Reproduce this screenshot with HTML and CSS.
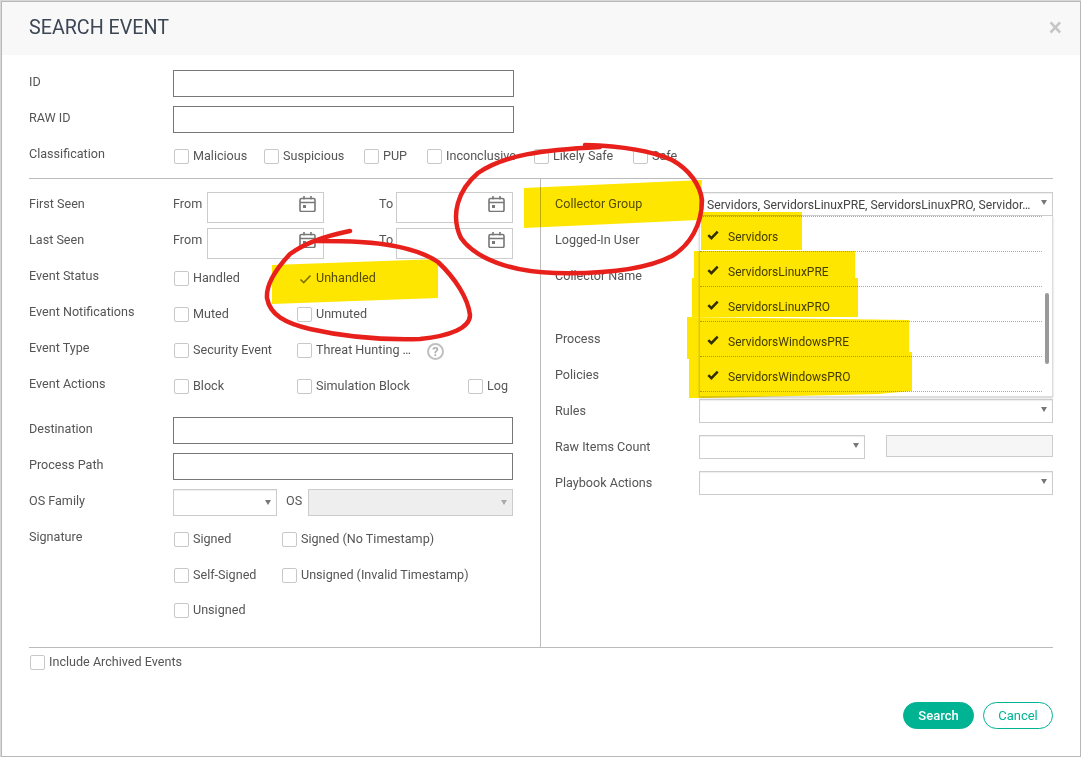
FILE: index.html
```html
<!DOCTYPE html>
<html lang="en">
<head>
    <meta charset="UTF-8">
    <title>Search Event</title>
    <link rel="stylesheet" href="styles.css">
</head>
<body>
    <div class="modal">
        <div class="modal-header">
            <h1>SEARCH EVENT</h1>
            <span class="close">×</span>
        </div>

        <div class="modal-body">
            <div class="row">
                <label>ID</label>
                <div class="text-input"></div>
            </div>
            <div class="row">
                <label>RAW ID</label>
                <div class="text-input"></div>
            </div>
            <div class="row">
                <label>Classification</label>
                <div class="options options-flow">
                    <span class="opt"><i class="box"></i>Malicious</span>
                    <span class="opt"><i class="box"></i>Suspicious</span>
                    <span class="opt"><i class="box"></i>PUP</span>
                    <span class="opt"><i class="box"></i>Inconclusive</span>
                    <span class="opt"><i class="box"></i>Likely Safe</span>
                    <span class="opt"><i class="box"></i>Safe</span>
                </div>
            </div>

            <div class="columns">
                <div class="col-left">
                    <div class="row">
                        <label>First Seen</label>
                        <div class="dates">
                            <span class="date-label">From</span>
                            <div class="date-input">
                                <svg class="cal" viewBox="0 0 17 17"><path d="M2.5 3.5h12a1.5 1.5 0 0 1 1.5 1.5v10a1.5 1.5 0 0 1-1.5 1.5h-12A1.500 1.500 0 0 1 1 15V5a1.500 1.500 0 0 1 1.500-1.500zM1 7.500h15M5 1v3.500M12 1v3.500" fill="none" stroke="#777" stroke-width="1.600"/><rect x="4" y="10" width="3" height="3" fill="#777"/></svg>
                            </div>
                            <span class="date-label date-to">To</span>
                            <div class="date-input date-input-to">
                                <svg class="cal" viewBox="0 0 17 17"><path d="M2.5 3.5h12a1.5 1.5 0 0 1 1.5 1.5v10a1.5 1.5 0 0 1-1.5 1.5h-12A1.500 1.500 0 0 1 1 15V5a1.500 1.500 0 0 1 1.500-1.500zM1 7.500h15M5 1v3.500M12 1v3.500" fill="none" stroke="#777" stroke-width="1.600"/><rect x="4" y="10" width="3" height="3" fill="#777"/></svg>
                            </div>
                        </div>
                    </div>
                    <div class="row">
                        <label>Last Seen</label>
                        <div class="dates">
                            <span class="date-label">From</span>
                            <div class="date-input">
                                <svg class="cal" viewBox="0 0 17 17"><path d="M2.5 3.5h12a1.5 1.5 0 0 1 1.5 1.5v10a1.5 1.5 0 0 1-1.5 1.5h-12A1.500 1.500 0 0 1 1 15V5a1.500 1.500 0 0 1 1.500-1.500zM1 7.500h15M5 1v3.500M12 1v3.500" fill="none" stroke="#777" stroke-width="1.600"/><rect x="4" y="10" width="3" height="3" fill="#777"/></svg>
                            </div>
                            <span class="date-label date-to">To</span>
                            <div class="date-input date-input-to">
                                <svg class="cal" viewBox="0 0 17 17"><path d="M2.5 3.5h12a1.5 1.5 0 0 1 1.5 1.5v10a1.5 1.5 0 0 1-1.5 1.5h-12A1.500 1.500 0 0 1 1 15V5a1.500 1.500 0 0 1 1.500-1.500zM1 7.500h15M5 1v3.500M12 1v3.500" fill="none" stroke="#777" stroke-width="1.600"/><rect x="4" y="10" width="3" height="3" fill="#777"/></svg>
                            </div>
                        </div>
                    </div>
                    <div class="row">
                        <label>Event Status</label>
                        <div class="options options-grid">
                            <span class="opt"><i class="box"></i>Handled</span>
                            <span class="opt"><i class="box box-checked"><svg viewBox="0 0 13 10"><path d="M1.500 5.500l3.200 3L11.500 1.500" fill="none" stroke="#7d7d7d" stroke-width="1.700"/></svg></i>Unhandled</span>
                        </div>
                    </div>
                    <div class="row">
                        <label>Event Notifications</label>
                        <div class="options options-grid">
                            <span class="opt"><i class="box"></i>Muted</span>
                            <span class="opt"><i class="box"></i>Unmuted</span>
                        </div>
                    </div>
                    <div class="row">
                        <label>Event Type</label>
                        <div class="options options-grid">
                            <span class="opt"><i class="box"></i>Security Event</span>
                            <span class="opt"><i class="box"></i>Threat Hunting …<b class="help">?</b></span>
                        </div>
                    </div>
                    <div class="row row-gap">
                        <label>Event Actions</label>
                        <div class="options options-actions">
                            <span class="opt"><i class="box"></i>Block</span>
                            <span class="opt"><i class="box"></i>Simulation Block</span>
                            <span class="opt"><i class="box"></i>Log</span>
                        </div>
                    </div>
                    <div class="row">
                        <label>Destination</label>
                        <div class="text-input"></div>
                    </div>
                    <div class="row">
                        <label>Process Path</label>
                        <div class="text-input"></div>
                    </div>
                    <div class="row">
                        <label>OS Family</label>
                        <div class="os-fields">
                            <div class="select select-tall select-os"></div>
                            <span class="os-label">OS</span>
                            <div class="select select-tall select-disabled"></div>
                        </div>
                    </div>
                    <div class="row">
                        <label>Signature</label>
                        <div class="options options-sign">
                            <span class="opt"><i class="box"></i>Signed</span>
                            <span class="opt"><i class="box"></i>Signed (No Timestamp)</span>
                        </div>
                    </div>
                    <div class="row row-short">
                        <label></label>
                        <div class="options options-sign">
                            <span class="opt"><i class="box"></i>Self-Signed</span>
                            <span class="opt"><i class="box"></i>Unsigned (Invalid Timestamp)</span>
                        </div>
                    </div>
                    <div class="row">
                        <label></label>
                        <div class="options options-sign">
                            <span class="opt"><i class="box"></i>Unsigned</span>
                        </div>
                    </div>
                </div>

                <div class="col-right">
                    <div class="row row-menu">
                        <label>Collector Group</label>
                        <div class="select select-value">Servidors, ServidorsLinuxPRE, ServidorsLinuxPRO, Servidor…</div>
                        <ul class="menu">
                            <li><svg class="tick" viewBox="0 0 12 10"><path d="M1.300 5.200l3.100 3L10.700 1.600" fill="none" stroke="#333" stroke-width="2.500"/></svg>Servidors</li>
                            <li><svg class="tick" viewBox="0 0 12 10"><path d="M1.300 5.200l3.100 3L10.700 1.600" fill="none" stroke="#333" stroke-width="2.500"/></svg>ServidorsLinuxPRE</li>
                            <li><svg class="tick" viewBox="0 0 12 10"><path d="M1.300 5.200l3.100 3L10.700 1.600" fill="none" stroke="#333" stroke-width="2.500"/></svg>ServidorsLinuxPRO</li>
                            <li><svg class="tick" viewBox="0 0 12 10"><path d="M1.300 5.200l3.100 3L10.700 1.600" fill="none" stroke="#333" stroke-width="2.500"/></svg>ServidorsWindowsPRE</li>
                            <li><svg class="tick" viewBox="0 0 12 10"><path d="M1.300 5.200l3.100 3L10.700 1.600" fill="none" stroke="#333" stroke-width="2.500"/></svg>ServidorsWindowsPRO</li>
                        </ul>
                        <span class="menu-scroll"></span>
                    </div>
                    <div class="row"><label>Logged-In User</label></div>
                    <div class="row row-tall"><label>Collector Name</label></div>
                    <div class="row"><label>Process</label></div>
                    <div class="row"><label>Policies</label></div>
                    <div class="row">
                        <label>Rules</label>
                        <div class="select"></div>
                    </div>
                    <div class="row">
                        <label>Raw Items Count</label>
                        <div class="raw-fields">
                            <div class="select"></div>
                            <div class="raw-count"></div>
                        </div>
                    </div>
                    <div class="row">
                        <label>Playbook Actions</label>
                        <div class="select"></div>
                    </div>
                </div>
            </div>

            <div class="archived">
                <span class="opt"><i class="box"></i>Include Archived Events</span>
            </div>
            <div class="actions">
                <button class="btn btn-search">Search</button>
                <button class="btn btn-cancel">Cancel</button>
            </div>
        </div>
    </div>

    <!-- highlighter and pen marks drawn over the screenshot -->
    <svg class="marks marks-yellow" viewBox="0 0 1081 757">
        <path d="M272 265L438 259V298L272 304z"/>
        <path d="M524 188L702 180L699 220L524 228z"/>
        <path d="M701 212H802V250H701z"/>
        <path d="M694 251H855V279H694z"/>
        <path d="M692 278H858V317H692z"/>
        <path d="M687 317L909 320V360L687 359z"/>
        <path d="M689 357L840 354L912 352V391L878 394L705 398H689z"/>
    </svg>
    <svg class="marks marks-red" viewBox="0 0 1081 757">
        <path d="M585 145C620 146 650 150 672 160C690 170 700 185 702 200C702 225 690 245 672 256C645 270 600 274 555 273C510 272 475 258 461 238C450 215 458 190 478 173C505 155 540 150 600 147"/>
        <path d="M350 231C325 236 305 243 290 254C275 270 266 285 267 298C270 315 285 323 310 329C345 337 385 340 420 339C450 336 470 328 470 315C468 298 455 278 438 262C420 250 395 244 360 242C345 241 330 241 315 241"/>
    </svg>
</body>
</html>
```

FILE: styles.css
```css
* {
    box-sizing: border-box;
}
html, body {
    height: 757px;
    overflow: hidden;
}
body {
    margin: 0;
    position: relative;
    background: #d8d8d8;
    font-family: Roboto, "Liberation Sans", sans-serif;
    font-size: 12.6px;
    color: #555;
}
.modal {
    width: 1080px;
    height: 756px;
    margin: 1px 0 0 1px;
    border: 1px solid #b8b8b8;
    background: #fff;
}
.modal-header {
    height: 53px;
    padding: 0 18px 2px 27px;
    background: #f8f8f8;
    display: flex;
    align-items: center;
    justify-content: space-between;
}
.modal-header h1 {
    margin: 0;
    font-size: 19.7px;
    font-weight: 400;
    color: #3c4654;
}
.close {
    font-size: 25px;
    line-height: 25px;
    font-weight: 500;
    color: #c6c6c6;
}
.modal-body {
    padding: 15px 27px 0 27px;
}

.row {
    display: grid;
    grid-template-columns: 144px 1fr;
    height: 36px;
    align-items: start;
}
.row label {
    line-height: 22px;
    padding-top: 1px;
}
.row-gap {
    margin-bottom: 9px;
}
.row-short {
    height: 35px;
}
.row-tall {
    height: 63px;
}

.text-input {
    height: 27px;
    border: 1px solid #777;
    width: 340px;
}
.modal-body > .row .text-input {
    width: 341px;
}

.options {
    padding: 7px 0 0 1px;
    line-height: 14px;
}
.options-flow {
    display: grid;
    grid-template-columns: 90px 100px 63px 107px 99px 1fr;
    white-space: nowrap;
}
.options-grid {
    display: grid;
    grid-template-columns: 123px 1fr;
}
.options-actions {
    display: grid;
    grid-template-columns: 123px 171px 1fr;
}
.options-sign {
    display: grid;
    grid-template-columns: 108px 1fr;
}
.opt {
    display: flex;
    align-items: flex-start;
    white-space: nowrap;
}
.box {
    flex: none;
    width: 15px;
    height: 15px;
    margin-right: 4px;
    border: 1px solid #c8c8c8;
    border-radius: 2px;
    background: #fff;
}
.box-checked {
    border-color: transparent;
    background: transparent;
    padding: 2px 0 0 1px;
}
.box-checked svg {
    display: block;
    width: 13px;
    height: 10px;
}
.help {
    width: 17px;
    height: 17px;
    margin: 0 0 0 16px;
    border: 2px solid #c0c0c0;
    border-radius: 50%;
    color: #b0b0b0;
    font-size: 13px;
    line-height: 14px;
    text-align: center;
}

.columns {
    display: grid;
    grid-template-columns: 512px 512px;
    height: 470px;
    border-top: 1px solid #bbb;
    border-bottom: 1px solid #bbb;
}
.col-left {
    padding-top: 13px;
    border-right: 1px solid #bbb;
    padding-right: 27px;
}
.col-right {
    padding: 13px 0 0 14px;
}

.dates {
    display: flex;
    align-items: flex-start;
}
.date-label {
    width: 34px;
    line-height: 22px;
    padding-top: 1px;
}
.date-to {
    width: 17px;
    margin-left: 55px;
}
.date-input {
    position: relative;
    width: 117px;
    height: 31px;
    border: 1px solid #ccc;
}
.date-input-to {
    width: 117px;
}
.cal {
    position: absolute;
    top: 2px;
    right: 7px;
    width: 17px;
    height: 17px;
}

.select {
    position: relative;
    height: 24px;
    border: 1px solid #ccc;
    box-shadow: inset 0 1px 1px #eee;
    background: #fff;
}
.select::after {
    content: "";
    position: absolute;
    top: 7px;
    right: 5px;
    border-left: 3px solid transparent;
    border-right: 3px solid transparent;
    border-top: 5px solid #777;
}
.select-tall {
    height: 27px;
}
.select-tall::after {
    top: 10px;
}
.select-os {
    width: 104px;
}
.select-disabled {
    width: 205px;
    background: #eee;
}
.select-disabled::after {
    border-top-color: #aaa;
}
.select-value {
    padding-left: 7px;
    font-size: 12.15px;
    line-height: 24px;
    color: #444;
    white-space: nowrap;
}
.os-fields {
    display: flex;
    align-items: flex-start;
}
.os-label {
    width: 31px;
    padding: 1px 0 0 9px;
    line-height: 22px;
}
.raw-fields {
    display: grid;
    grid-template-columns: 166px 167px;
    gap: 21px;
}
.raw-count {
    height: 22px;
    border: 1px solid #ccc;
    background: #f6f6f6;
}

/* open collector group dropdown */
.row-menu {
    position: relative;
}
.menu {
    position: absolute;
    top: 24px;
    left: 144px;
    right: 0;
    height: 181px;
    margin: 0;
    padding: 0 10px 0 0;
    list-style: none;
    font-size: 12px;
    background: #fff;
    border: 1px solid #ddd;
    border-top: 0;
    box-shadow: 0 1px 2px #ccc;
    color: #444;
}
.menu::before {
    content: "";
    display: block;
    border-top: 1px dotted #aaa;
}
.menu li {
    height: 35px;
    padding: 5px 0 0 28px;
    display: flex;
    align-items: center;
    border-bottom: 1px dotted #aaa;
    position: relative;
}
.tick {
    position: absolute;
    left: 7px;
    top: 13px;
    width: 12px;
    height: 10px;
}
.menu-scroll {
    position: absolute;
    top: 101px;
    right: 4px;
    width: 4px;
    height: 71px;
    border-radius: 2px;
    background: #999;
}

.archived {
    height: 36px;
    padding: 7px 0 0 1px;
    line-height: 14px;
}
.actions {
    display: flex;
    justify-content: flex-end;
    gap: 9px;
    margin-top: 18px;
}
.btn {
    width: 71px;
    height: 27px;
    border-radius: 14px;
    border: 1px solid #00b493;
    font-family: inherit;
    font-size: 13px;
    padding: 0;
}
.btn-search {
    background: #00b493;
    color: #fff;
    font-weight: 500;
}
.btn-cancel {
    width: 70px;
    background: #fff;
    color: #00b493;
}

.marks {
    position: absolute;
    top: 0;
    left: 0;
    width: 1081px;
    height: 757px;
    pointer-events: none;
}
.marks-yellow {
    fill: #ffe600;
    mix-blend-mode: multiply;
}
.marks-red {
    fill: none;
    stroke: #e8201c;
    stroke-width: 4.500;
    stroke-linecap: round;
}
```
